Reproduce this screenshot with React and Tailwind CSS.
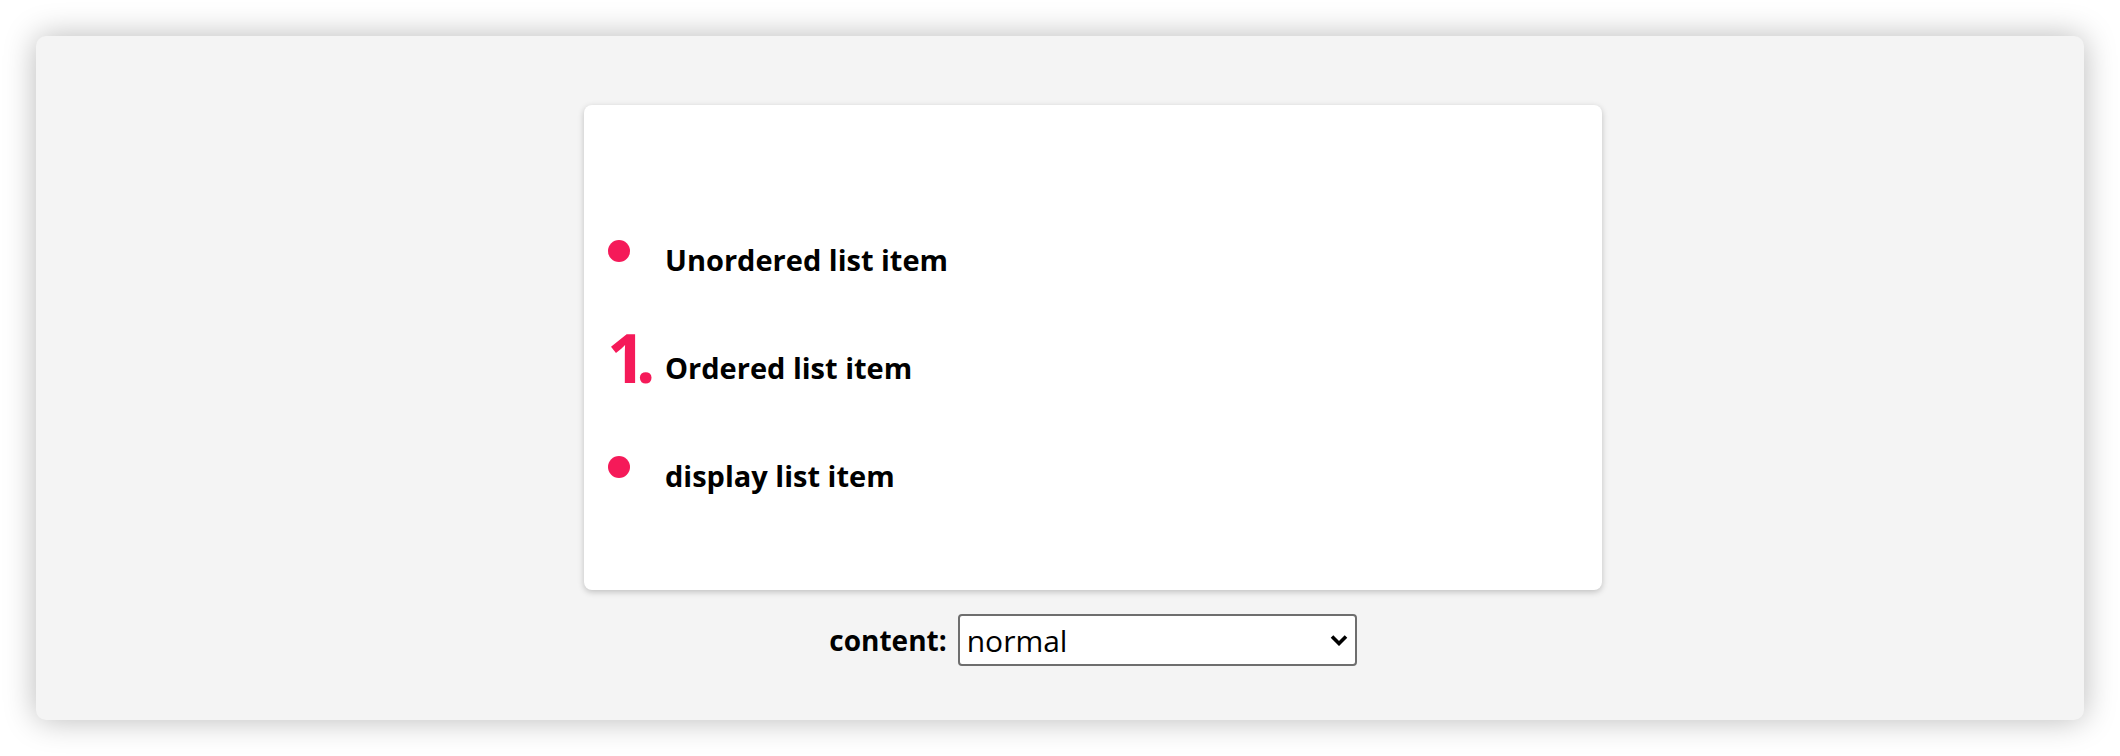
import { useState } from 'react';

const pink = 'bg-[#f51a59]';

function Bullet() {
  return <span className={`block size-[22px] shrink-0 rounded-full ${pink}`} />;
}

function Row({ marker, children }) {
  return (
    <li className="flex h-[108px] items-start">
      <div className="w-[57px] shrink-0">{marker}</div>
      <span className="text-[29px] font-bold leading-[39px] text-black">{children}</span>
    </li>
  );
}

export default function App() {
  const [content, setContent] = useState('normal');

  return (
    <div className="h-[756px] bg-white p-[36px] font-['Open_Sans',sans-serif]">
      <div className="flex h-[684px] flex-col items-center rounded-[10px] bg-[#f4f4f4] pl-[66px] pt-[69px] shadow-[0_0_32px_rgba(0,0,0,0.28)]">
        <div className="h-[485px] w-[1018px] rounded-lg bg-white pl-6 pt-[135px] shadow-[0_2px_6px_rgba(0,0,0,0.22)]">
          <ul>
            <Row marker={<Bullet />}>Unordered list item</Row>
            <Row
              marker={
                <span className="ml-[-1px] mt-[-25px] block text-[68px] font-bold leading-none text-[#f51a59]">
                  <span className="tracking-[-10px]">1</span>.
                </span>
              }
            >
              Ordered list item
            </Row>
            <Row marker={<Bullet />}>display list item</Row>
          </ul>
        </div>

        <div className="mt-6 flex items-center gap-[11px]">
          <label htmlFor="content" className="text-[28px] font-bold text-black">
            content:
          </label>
          <div className="relative">
            <select
              id="content"
              value={content}
              onChange={(e) => setContent(e.target.value)}
              className="h-[52px] w-[399px] appearance-none rounded-[4px] border-2 border-[#6e6e6e] bg-white pl-[7px] text-[30px] text-black outline-none"
            >
              <option value="normal">normal</option>
              <option value="none">none</option>
              <option value="counter">counter</option>
            </select>
            <svg
              className="pointer-events-none absolute right-[9px] top-[20px]"
              width="18"
              height="12"
              viewBox="0 0 18 12"
              fill="none"
            >
              <path d="M2 2.5 9 9.5 16 2.5" stroke="black" strokeWidth="3.6" strokeLinejoin="miter" />
            </svg>
          </div>
        </div>
      </div>
    </div>
  );
}
